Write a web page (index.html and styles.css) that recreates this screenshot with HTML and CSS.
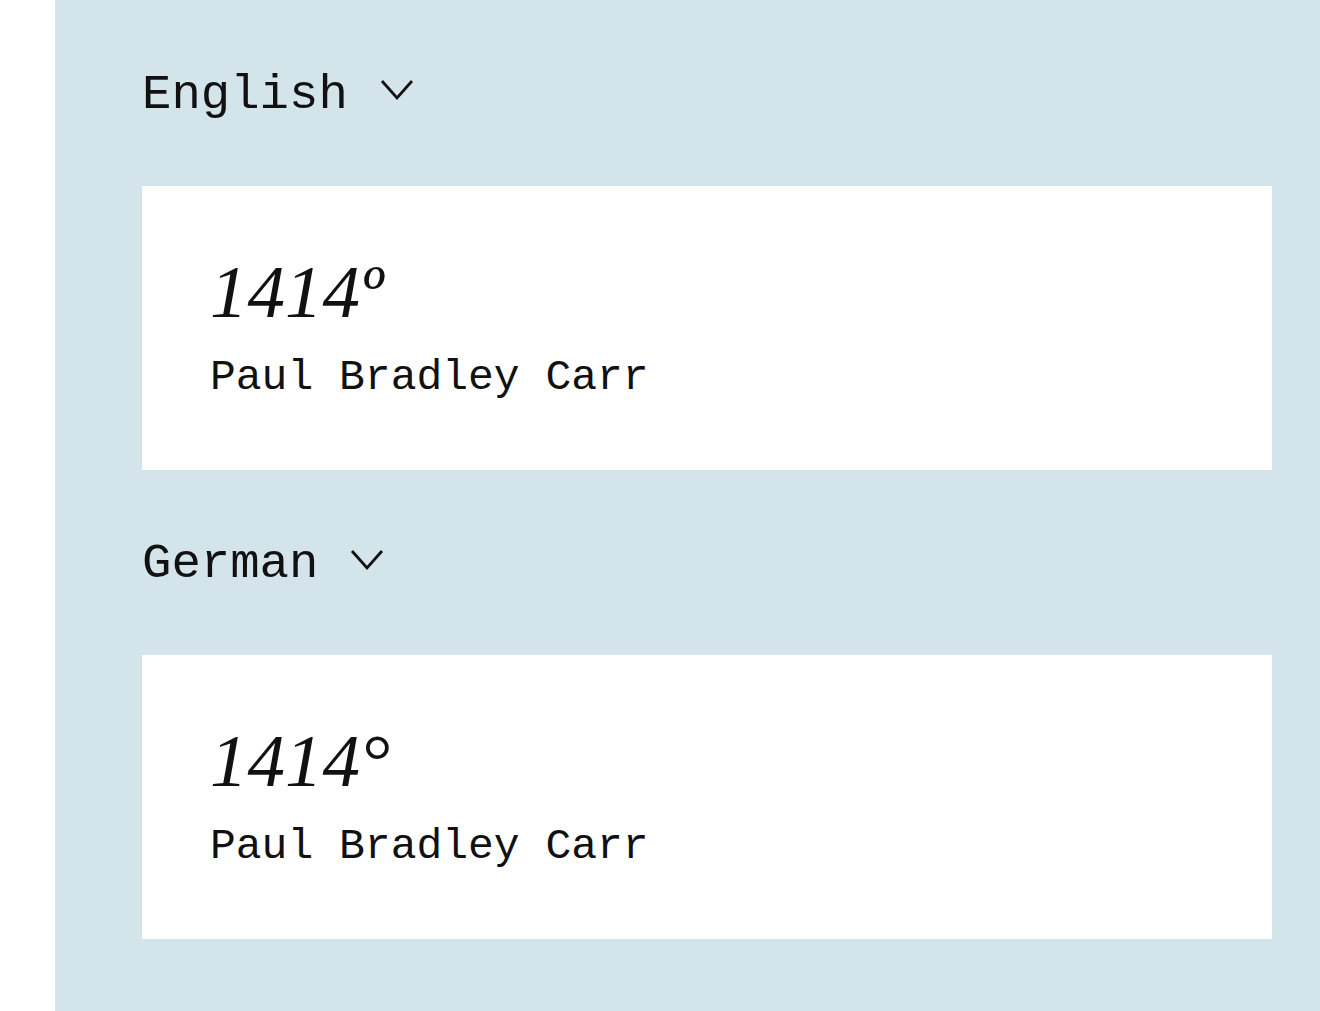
FILE: index.html
```html
<!DOCTYPE html>
<html lang="en">
  <head>
    <meta charset="utf-8">
    <title>1414° - translations</title>
    <link rel="stylesheet" href="styles.css">
  </head>
  <body>
    <section class="panel">
      <div class="lang">
        <span>English</span>
        <svg class="chevron" width="34" height="24" viewBox="0 0 34 24"><path d="M2 3 L17 20 L32 3" /></svg>
      </div>
      <div class="card">
        <h1>1414º</h1>
        <p class="author">Paul Bradley Carr</p>
      </div>

      <div class="lang">
        <span>German</span>
        <svg class="chevron" width="34" height="24" viewBox="0 0 34 24"><path d="M2 3 L17 20 L32 3" /></svg>
      </div>
      <div class="card">
        <h1>1414°</h1>
        <p class="author">Paul Bradley Carr</p>
      </div>
    </section>
  </body>
</html>
```

FILE: styles.css
```css
body {
    margin: 0;
    background: white;
    color: #111;
    font-family: "Liberation Mono", "DejaVu Sans Mono", monospace;
}

.panel {
    margin-left: 55px;
    padding: 0 48px 80px 87px;
    background: #d4e4eb;
}

.lang {
    height: 186px;
    display: flex;
    align-items: center;
    gap: 32px;
    font-size: 49px;
    line-height: 1;
}

.card + .lang {
    height: 185px;
}

.lang span {
    position: relative;
    top: 2px;
}

.chevron {
    position: relative;
    top: -3px;
}

.chevron path {
    fill: none;
    stroke: #111;
    stroke-width: 2.8;
}

.card {
    height: 284px;
    box-sizing: border-box;
    padding: 68px 68px 0;
    background: white;
}

.card h1 {
    margin: 0;
    font-family: "Liberation Serif", serif;
    font-style: italic;
    font-weight: normal;
    font-size: 75px;
    line-height: 1;
}

.card .author {
    margin: 27px 0 0;
    font-size: 43px;
    line-height: 1;
}
```
